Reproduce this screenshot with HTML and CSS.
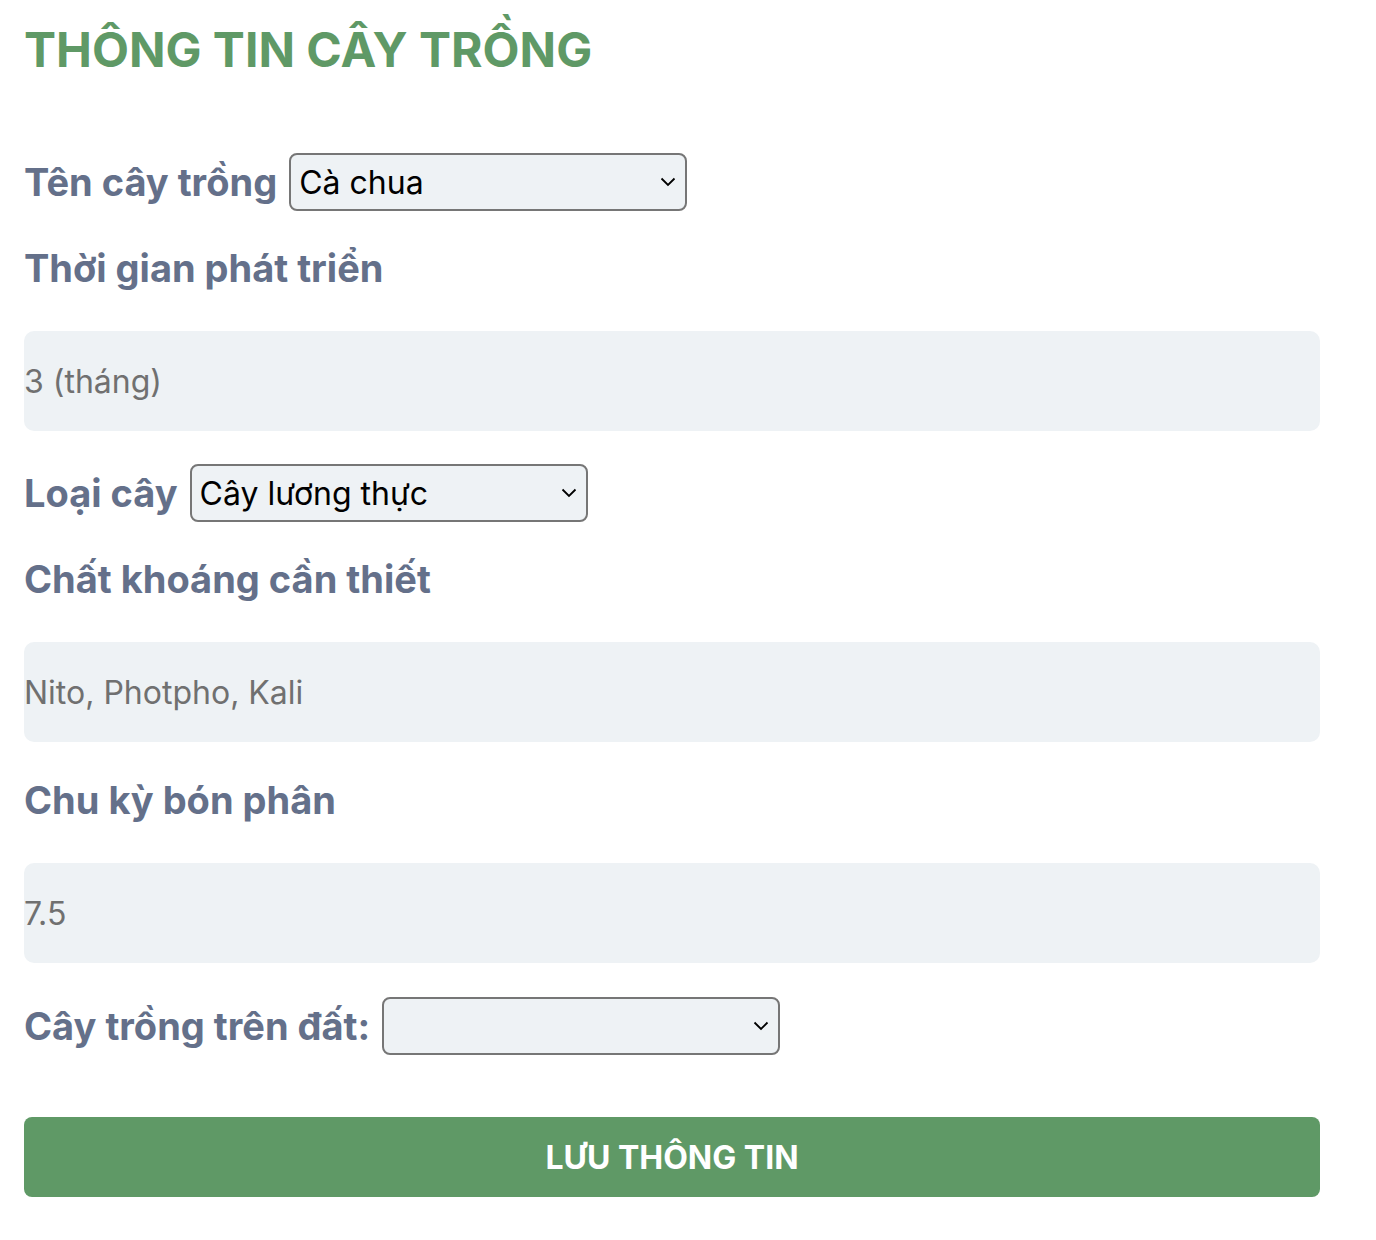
FILE: index.html
```html
<!DOCTYPE html>
<html lang="vi">
<head>
<meta charset="utf-8">
<title>Thông tin cây trồng</title>
<link rel="stylesheet" href="styles.css">
</head>
<body>
<main class="form">
  <h1 class="title">THÔNG TIN CÂY TRỒNG</h1>

  <div class="row first">
    <label class="label" for="ten">Tên cây trồng</label>
    <select id="ten" class="select"><option>Cà chua</option></select>
  </div>

  <label class="label block" for="tg">Thời gian phát triển</label>
  <input id="tg" class="input" type="text" value="3 (tháng)" readonly>

  <div class="row">
    <label class="label" for="loai">Loại cây</label>
    <select id="loai" class="select"><option>Cây lương thực</option></select>
  </div>

  <label class="label block" for="ck">Chất khoáng cần thiết</label>
  <input id="ck" class="input" type="text" value="Nito, Photpho, Kali" readonly>

  <label class="label block after-input" for="cky">Chu kỳ bón phân</label>
  <input id="cky" class="input" type="text" value="7.5" readonly>

  <div class="row last">
    <label class="label" for="dat">Cây trồng trên đất:</label>
    <select id="dat" class="select"><option></option></select>
  </div>

  <button class="btn" type="button">LƯU THÔNG TIN</button>
</main>
</body>
</html>
```

FILE: styles.css
```css
* { box-sizing: border-box; }

body {
  margin: 0;
  background: #ffffff;
  font-family: Inter, "Noto Sans", "Liberation Sans", sans-serif;
}

.form {
  width: 1296px;
  margin-left: 24px;
  padding-top: 21px;
  display: flex;
  flex-direction: column;
  align-items: flex-start;
}

.title {
  margin: 0 0 74px 0;
  font-size: 48px;
  line-height: 58px;
  font-weight: 700;
  color: #5f9966;
}

.row {
  display: flex;
  align-items: center;
  gap: 12px;
  margin-top: 33px;
}

.row.first { margin-top: 0; }
.row.last { margin-top: 34px; }

.label {
  font-size: 38px;
  line-height: 46px;
  font-weight: 700;
  color: #64708a;
}

.label.block { margin-top: 34px; }
.label.block.after-input { margin-top: 35px; }

.select {
  appearance: none;
  -webkit-appearance: none;
  width: 398px;
  height: 58px;
  border: 2px solid #767676;
  border-radius: 8px;
  background-color: #eef2f5;
  background-image: url("data:image/svg+xml,%3Csvg xmlns='http://www.w3.org/2000/svg' width='16' height='10' viewBox='0 0 16 10'%3E%3Cpath d='M1.5 1.5l6.5 6.5 6.5-6.5' fill='none' stroke='%23000' stroke-width='1.8'/%3E%3C/svg%3E");
  background-repeat: no-repeat;
  background-position: right 9px center;
  padding: 0 30px 0 8px;
  font-family: Inter, "Noto Sans", "Liberation Sans", sans-serif;
  font-size: 32px;
  color: #000;
}

.input {
  width: 1296px;
  height: 100px;
  margin-top: 40px;
  border: none;
  outline: none;
  border-radius: 10px;
  background: #eef2f5;
  padding: 0;
  font-family: Inter, "Noto Sans", "Liberation Sans", sans-serif;
  font-size: 32px;
  color: #707070;
}

.btn {
  width: 1296px;
  height: 80px;
  margin-top: 62px;
  border: none;
  border-radius: 8px;
  background: #5f9966;
  color: #ffffff;
  font-family: Inter, "Noto Sans", "Liberation Sans", sans-serif;
  font-size: 32px;
  font-weight: 700;
}
```
